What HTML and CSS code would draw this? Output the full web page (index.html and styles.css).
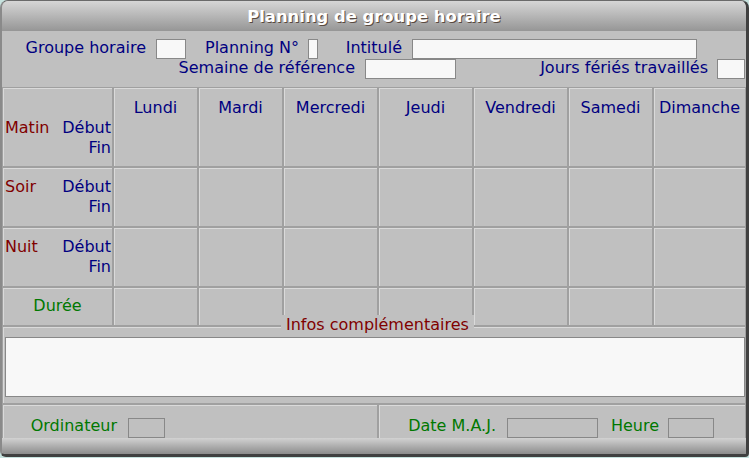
FILE: index.html
```html
<!DOCTYPE html>
<html lang="fr">
<head>
<meta charset="utf-8">
<title>Planning de groupe horaire</title>
<link rel="stylesheet" href="styles.css">
</head>
<body>
<div class="window">
  <div class="titlebar">Planning de groupe horaire</div>
  <div class="form">
    <div class="row">
      <span class="lbl blue l-groupe">Groupe horaire</span>
      <span class="inp w-groupe"></span>
      <span class="lbl blue l-planning">Planning N°</span>
      <span class="inp w-planning"></span>
      <span class="lbl blue l-intitule">Intitulé</span>
      <span class="inp w-intitule"></span>
    </div>
    <div class="row">
      <span class="lbl blue l-semaine">Semaine de référence</span>
      <span class="inp w-semaine"></span>
      <span class="lbl blue l-jours">Jours fériés travaillés</span>
      <span class="inp w-jours"></span>
    </div>
  </div>
  <div class="grid">
    <div class="cell side side-first">
      <span class="red">Matin</span>
      <span class="blue sub"><span>Début</span><span>Fin</span></span>
    </div>
    <div class="cell day blue">Lundi</div>
    <div class="cell day blue">Mardi</div>
    <div class="cell day blue">Mercredi</div>
    <div class="cell day blue">Jeudi</div>
    <div class="cell day blue">Vendredi</div>
    <div class="cell day blue">Samedi</div>
    <div class="cell day blue">Dimanche</div>

    <div class="cell side">
      <span class="red">Soir</span>
      <span class="blue sub"><span>Début</span><span>Fin</span></span>
    </div>
    <div class="cell"></div><div class="cell"></div><div class="cell"></div><div class="cell"></div><div class="cell"></div><div class="cell"></div><div class="cell"></div>

    <div class="cell side">
      <span class="red">Nuit</span>
      <span class="blue sub"><span>Début</span><span>Fin</span></span>
    </div>
    <div class="cell"></div><div class="cell"></div><div class="cell"></div><div class="cell"></div><div class="cell"></div><div class="cell"></div><div class="cell"></div>

    <div class="cell duree green">Durée</div>
    <div class="cell"></div><div class="cell"></div><div class="cell"></div><div class="cell"></div><div class="cell"></div><div class="cell"></div><div class="cell"></div>
  </div>
  <div class="cell infos">
    <span class="legend red">Infos complémentaires</span>
    <div class="textarea"></div>
  </div>
  <div class="bottom">
    <div class="cell bcell">
      <span class="lbl green l-ordi">Ordinateur</span>
      <span class="inp ro w-ordi"></span>
    </div>
    <div class="cell bcell">
      <span class="lbl green l-date">Date M.A.J.</span>
      <span class="inp ro w-date"></span>
      <span class="lbl green l-heure">Heure</span>
      <span class="inp ro w-heure"></span>
    </div>
  </div>
  <div class="footer"></div>
</div>
</body>
</html>
```

FILE: styles.css
```css
html, body {
  margin: 0;
  padding: 0;
  background: #c6e2de;
}
body {
  font-family: "DejaVu Sans", Verdana, sans-serif;
  font-size: 16px;
  line-height: 20px;
}
.window {
  width: 749px;
  height: 457px;
  box-sizing: border-box;
  background: #c0c0c0;
  border-top: 1px solid #6a6a6a;
  border-left: 2px solid #8a8a8a;
  border-right: 3px solid #404040;
  border-bottom: 3px solid #404040;
  border-radius: 8px 8px 4px 6px;
  overflow: hidden;
  display: flex;
  flex-direction: column;
}
.titlebar {
  height: 30px;
  flex: none;
  background: linear-gradient(#d6d6d6, #969696);
  color: #ffffff;
  font-weight: bold;
  font-size: 16.4px;
  line-height: 32px;
  text-align: center;
  text-shadow: 1px 1px 0 #5a4a40;
}
.form {
  height: 56px;
  flex: none;
  box-sizing: border-box;
  padding-top: 8px;
}
.row {
  display: flex;
  align-items: center;
  height: 20px;
}
.lbl { white-space: nowrap; }
.row .lbl { padding-bottom: 2px; }
.blue { color: #000080; }
.red { color: #800000; }
.green { color: #007800; }
.inp {
  display: block;
  box-sizing: border-box;
  height: 20px;
  border: 1px solid #888888;
  background: #f8f8f8;
  flex: none;
}
.inp.ro { background: #c0c0c0; }

.l-groupe { width: 144px; text-align: right; margin-right: 10px; }
.w-groupe { width: 30px; }
.l-planning { width: 113px; text-align: right; margin-right: 9px; }
.w-planning { width: 10px; }
.l-intitule { width: 84px; text-align: right; margin-right: 10px; }
.w-intitule { width: 285px; }
.l-semaine { width: 353px; text-align: right; margin-right: 10px; }
.w-semaine { width: 91px; }
.l-jours { flex: 1; text-align: right; margin-right: 9px; }
.w-jours { width: 28px; margin-right: 1px; }

.grid {
  flex: none;
  display: grid;
  grid-template-columns: 111px 85px 85px 95px 95px 95px 85px 93px;
  grid-template-rows: 80px 60px 60px 39px;
}
.cell {
  box-sizing: border-box;
  border: 1px solid #a0a0a0;
  box-shadow: inset 1px 1px 0 #dadada;
}
.day {
  text-align: center;
  padding-top: 10px;
}
.side {
  display: flex;
  justify-content: space-between;
  padding: 9px 1px 0 2px;
}
.side-first { padding-top: 30px; }
.sub {
  display: flex;
  flex-direction: column;
  align-items: flex-end;
}
.duree {
  display: flex;
  align-items: center;
  justify-content: center;
  padding-bottom: 2px;
}
.infos {
  flex: none;
  height: 78px;
  position: relative;
  padding: 10px 0 0 2px;
}
.legend {
  position: absolute;
  top: -12px;
  left: 278px;
  padding: 0 5px;
  background: #c0c0c0;
  white-space: nowrap;
}
.textarea {
  box-sizing: border-box;
  height: 60px;
  border: 1px solid #888888;
  background: #f8f8f8;
}
.bottom {
  flex: none;
  height: 34px;
  display: grid;
  grid-template-columns: 376px 368px;
}
.bcell {
  display: flex;
  align-items: center;
  padding-top: 11px;
}
.bcell .lbl { padding-bottom: 3px; }
.l-ordi { width: 114px; text-align: right; margin-right: 11px; }
.w-ordi { width: 37px; }
.l-date { width: 117px; text-align: right; margin-right: 11px; }
.w-date { width: 91px; }
.l-heure { width: 61px; text-align: right; margin-right: 9px; }
.w-heure { width: 46px; }
.footer {
  flex: 1;
  background: linear-gradient(#d2d2d2, #8c8c8c);
}
```
